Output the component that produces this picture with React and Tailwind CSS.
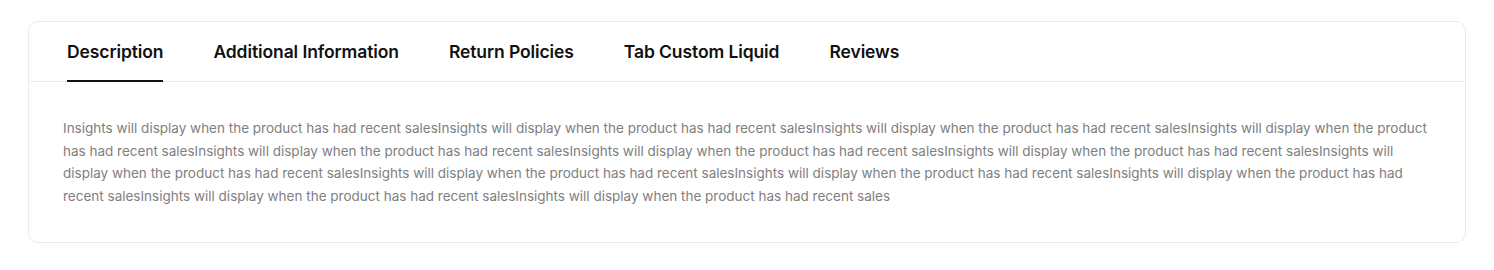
import React, { useState } from 'react';

const tabs = ['Description', 'Additional Information', 'Return Policies', 'Tab Custom Liquid', 'Reviews'];

const sentence = 'Insights will display when the product has had recent sales';

const App = () => {
  const [active, setActive] = useState(0);

  return (
    <div className="min-h-[270px] bg-white px-[28px] pt-[21px]" style={{ fontFamily: 'Inter, "Noto Sans", sans-serif' }}>
      <div className="rounded-[10px] border border-[#ebebeb] bg-white">
        {/* Tab bar */}
        <div className="flex h-[60px] items-stretch gap-[50px] border-b border-[#ebebeb] px-[38px]">
          {tabs.map((label, i) => (
            <button
              key={label}
              onClick={() => setActive(i)}
              className={`relative flex items-center pt-[1px] text-[17.5px] font-semibold tracking-[-0.1px] text-[#111] ${
                i === active ? 'after:absolute after:bottom-[-1px] after:left-0 after:right-0 after:h-[2px] after:bg-[#111]' : ''
              }`}
            >
              {label}
            </button>
          ))}
        </div>

        {/* Content */}
        <div className="px-[34px] pb-[35px] pt-[35px]">
          <p className="text-[13.5px] leading-[22.5px] text-[#808080]">
            {Array(13).fill(sentence).join('')}
          </p>
        </div>
      </div>
    </div>
  );
};

export default App;
